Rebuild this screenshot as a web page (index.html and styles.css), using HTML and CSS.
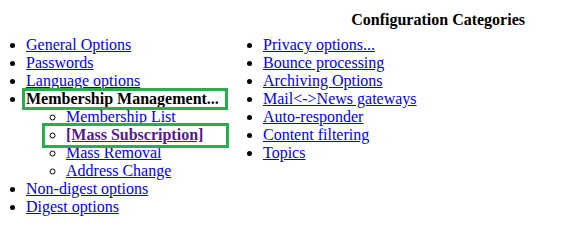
FILE: index.html
```
<!DOCTYPE html>
<html lang="en">
<head>
    <meta charset="UTF-8">
    <title>Configuration Categories</title>
    <link rel="stylesheet" href="styles.css">
</head>
<body>
    <div class="categories">
        <div class="cat-head">Configuration Categories</div>
        <div class="cat-cols">
            <ul class="cat-list">
                <li><a href="#">General Options</a></li>
                <li><a href="#">Passwords</a></li>
                <li><a href="#">Language options</a></li>
                <li class="marked marked-main"><strong>Membership Management...</strong>
                    <ul class="sub-list">
                        <li><a href="#">Membership List</a></li>
                        <li class="marked marked-sub"><a href="#" class="current"><strong>[Mass Subscription]</strong></a></li>
                        <li><a href="#">Mass Removal</a></li>
                        <li><a href="#">Address Change</a></li>
                    </ul>
                </li>
                <li><a href="#">Non-digest options</a></li>
                <li><a href="#">Digest options</a></li>
            </ul>
            <ul class="cat-list">
                <li><a href="#">Privacy options...</a></li>
                <li><a href="#">Bounce processing</a></li>
                <li><a href="#">Archiving Options</a></li>
                <li><a href="#">Mail&lt;-&gt;News gateways</a></li>
                <li><a href="#">Auto-responder</a></li>
                <li><a href="#">Content filtering</a></li>
                <li><a href="#">Topics</a></li>
            </ul>
        </div>
    </div>
</body>
</html>
```
FILE: styles.css
```
body {
    margin: 8px;
    font-family: "Liberation Serif", "Times New Roman", serif;
    font-size: 16px;
    line-height: 18px;
    background-color: #ffffff;
    color: #000000;
}
a {
    color: #0000ee;
}
a.current {
    color: #551a8b;
}
.cat-head {
    display: flex;
    justify-content: flex-end;
    padding: 3px 34px 0 0;
    font-weight: bold;
}
.cat-cols {
    display: grid;
    grid-template-columns: 237px 1fr;
    margin-top: 7px;
}
.cat-list {
    margin: 0;
    padding-left: 18px;
}
.sub-list {
    margin: 0;
    padding-left: 40px;
    list-style-type: circle;
}
.marked {
    position: relative;
}
.marked::after {
    content: "";
    position: absolute;
    border: 3px solid #22b14c;
    pointer-events: none;
}
.marked-main::after {
    left: -4px;
    top: -2px;
    width: 200px;
    height: 16px;
}
.marked-sub::after {
    left: -24px;
    top: -3px;
    width: 181px;
    height: 19px;
}
```
